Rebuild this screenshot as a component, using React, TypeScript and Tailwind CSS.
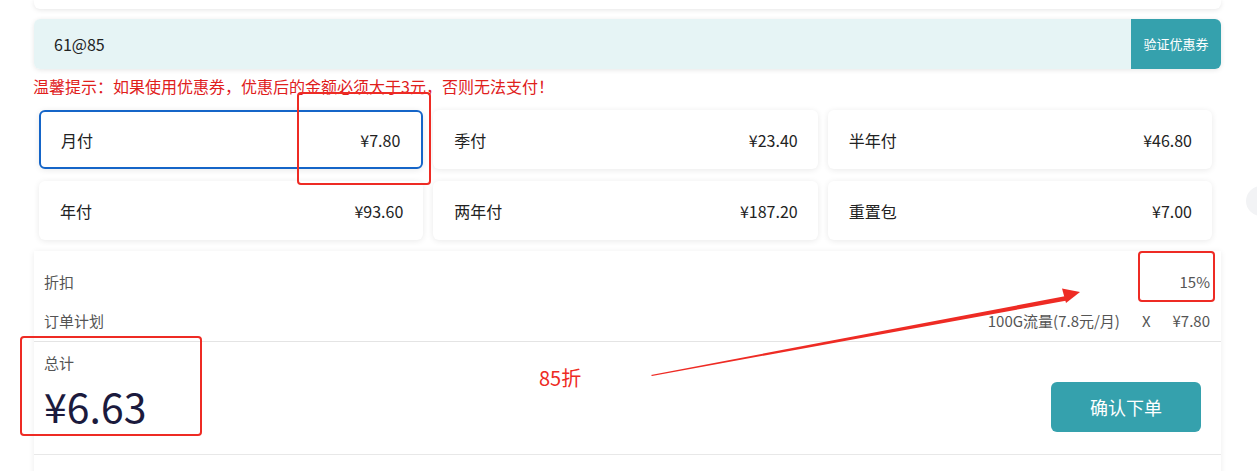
import React from 'react';

const plans = [
  { name: '月付', price: '¥7.80', active: true },
  { name: '季付', price: '¥23.40' },
  { name: '半年付', price: '¥46.80' },
  { name: '年付', price: '¥93.60' },
  { name: '两年付', price: '¥187.20' },
  { name: '重置包', price: '¥7.00' },
];

export default function App() {
  return (
    <div
      className="relative w-[1257px] h-[471px] overflow-hidden bg-white text-[#333]"
      style={{ fontFamily: '"Noto Sans CJK SC", "Noto Sans", sans-serif' }}
    >
      <div className="ml-[34px] w-[1187px]">
        {/* card above, cut off */}
        <div className="h-[9px] bg-white rounded-b-md shadow-[0_1px_5px_rgba(0,0,0,0.1)]" />

        {/* coupon */}
        <div className="mt-[10px] flex h-[50px] rounded-md overflow-hidden shadow-[0_1px_5px_rgba(0,0,0,0.1)]">
          <div className="flex-1 bg-[#e6f4f5] pl-[20px] flex items-center text-[16px] text-[#222]">61@85</div>
          <button className="w-[90px] bg-[#35a1ad] text-white text-[13px] flex items-center justify-center">
            验证优惠券
          </button>
        </div>

        <p className="mt-[6px] -ml-px text-[16px] leading-[22px] text-[#e0201c]">
          温馨提示：如果使用优惠券，优惠后的金额必须大于3元，否则无法支付！
        </p>

        {/* plans */}
        <div className="mt-[13px] ml-[5px] w-[1173px] grid grid-cols-3 gap-x-[10px] gap-y-[12px]">
          {plans.map(p => (
            <div
              key={p.name}
              className={
                'h-[59px] rounded-md bg-white flex items-center justify-between text-[16px] text-[#222] shadow-[0_1px_6px_rgba(0,0,0,0.09)] ' +
                (p.active ? 'border-2 border-[#1565c8] pl-[20px] pr-[21px]' : 'pl-[21px] pr-[20px]')
              }
            >
              <span>{p.name}</span>
              <span>{p.price}</span>
            </div>
          ))}
        </div>

        {/* summary */}
        <div className="mt-[11px] bg-white shadow-[0_1px_6px_rgba(0,0,0,0.08)]">
          <div className="pl-[10px] pr-[11px] pt-[20px] text-[15px] text-[#555]">
            <div className="flex justify-between items-center h-[22px]">
              <span>折扣</span>
              <span>15%</span>
            </div>
            <div className="mt-[17px] flex justify-between items-center h-[22px]">
              <span>订单计划</span>
              <span className="flex gap-[22px]">
                <span>100G流量(7.8元/月)</span>
                <span>X</span>
                <span>¥7.80</span>
              </span>
            </div>
          </div>
          <div className="mt-[9px] border-t border-[#e4e4e4]" />
          <div className="flex items-end justify-between pl-[10px] pr-[20px] h-[113px] border-b border-[#e8e8e8]">
            <div className="self-start pt-[10px]">
              <div className="text-[15px] text-[#555] leading-[22px]">总计</div>
              <div className="mt-[9px] text-[41px] leading-[44px] text-[#1b1a3d]">¥6.63</div>
            </div>
            <button className="mb-[22px] w-[150px] h-[50px] rounded-md bg-[#35a1ad] text-white text-[18px]">
              确认下单
            </button>
          </div>
          <div className="h-[40px]" />
        </div>
      </div>

      {/* right edge blob */}
      <div className="absolute left-[1246px] top-[186px] w-[30px] h-[30px] rounded-full bg-[#f2f3f5]" />

      {/* annotations */}
      <div className="absolute left-[297px] top-[92px] w-[134px] h-[93px] border-2 border-[#ee2b24] rounded-sm" />
      <div className="absolute left-[1138px] top-[251px] w-[77px] h-[51px] border-2 border-[#ee2b24] rounded-sm" />
      <div className="absolute left-[20px] top-[336px] w-[182px] h-[100px] border-2 border-[#ee2b24] rounded-sm" />
      <div className="absolute left-[539px] top-[364px] text-[20px] leading-[28px] text-[#ee2b24]">85折</div>
      <svg className="absolute left-0 top-0" width="1257" height="471">
        <polygon points="651,375 1066,296 1067,300.5 652,376" fill="#ee2b24" />
        <polygon points="1080,292 1062,288.5 1066,303" fill="#ee2b24" />
      </svg>
    </div>
  );
}
